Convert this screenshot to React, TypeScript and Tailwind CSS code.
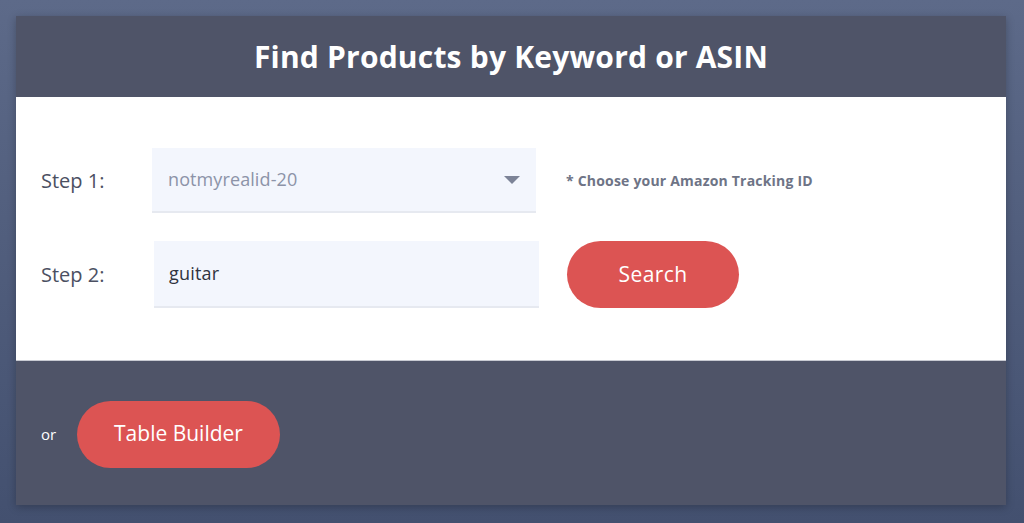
export default function App() {
  const font = { fontFamily: '"Open Sans", "Noto Sans", sans-serif' };
  return (
    <div
      className="w-[1024px] h-[523px] bg-gradient-to-b from-[#5d6a89] to-[#43506f] p-4 pb-[18px]"
      style={font}
    >
      <div className="w-[990px] h-[489px] flex flex-col shadow-[0_2px_8px_rgba(0,0,0,0.25)]">
        <div className="h-[81px] bg-[#4f5468] flex items-center justify-center">
          <h1 className="text-white text-[30px] font-bold tracking-[0.2px]">
            Find Products by Keyword or ASIN
          </h1>
        </div>
        <div className="h-[264px] bg-white border-b border-[#c8cad2] pl-[25px] pt-[51px] flex flex-col gap-[28px]">
          <div className="flex items-center">
            <div className="w-[111px] text-[20px] text-[#4b5062]">Step 1:</div>
            <div className="w-[384px] h-[65px] bg-[#f3f6fd] border-b-2 border-[#e6e9f0] flex items-center justify-between pl-[16px] pr-[16px]">
              <span className="text-[18px] text-[#8c93a8] tracking-[0.1px]">notmyrealid-20</span>
              <svg width="16" height="10" viewBox="0 0 16 10">
                <path d="M0 1 L16 1 L8 9 Z" fill="#7c8397" />
              </svg>
            </div>
            <div className="ml-[30px] text-[14px] font-bold text-[#6e7486] tracking-[0.2px]">
              * Choose your Amazon Tracking ID
            </div>
          </div>
          <div className="flex items-center">
            <div className="w-[113px] text-[20px] text-[#4b5062]">Step 2:</div>
            <div className="w-[385px] h-[67px] bg-[#f3f6fd] border-b-2 border-[#e6e9f0] flex items-center pl-[15px]">
              <span className="text-[18px] text-[#2f3340] tracking-[0.2px]">guitar</span>
            </div>
            <button className="ml-[28px] w-[172px] h-[67px] rounded-full bg-[#dc5453] text-white text-[21px] tracking-[0.4px]">
              Search
            </button>
          </div>
        </div>
        <div className="flex-1 bg-[#4f5468] flex items-center pl-[25px] pt-[2px]">
          <span className="text-white text-[15px] w-[36px]">or</span>
          <button className="w-[203px] h-[67px] rounded-full bg-[#dc5453] text-white text-[21px]">
            Table Builder
          </button>
        </div>
      </div>
    </div>
  );
}
